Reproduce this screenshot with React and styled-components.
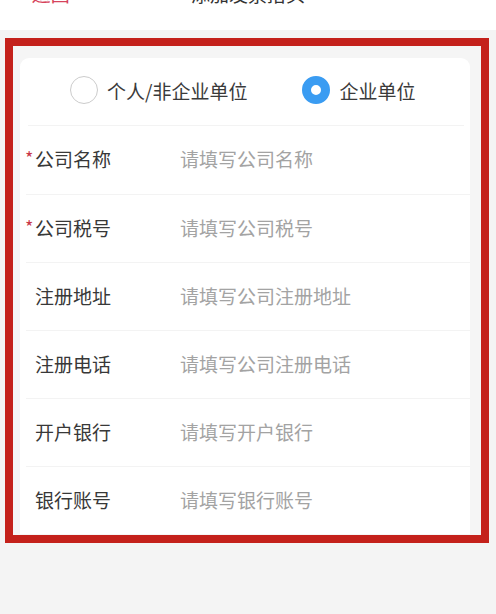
import React, { useState } from "react";
import styled, { createGlobalStyle } from "styled-components";

const fields = [
    { label: "公司名称", placeholder: "请填写公司名称", required: true },
    { label: "公司税号", placeholder: "请填写公司税号", required: true },
    { label: "注册地址", placeholder: "请填写公司注册地址" },
    { label: "注册电话", placeholder: "请填写公司注册电话" },
    { label: "开户银行", placeholder: "请填写开户银行" },
    { label: "银行账号", placeholder: "请填写银行账号" },
];

const App = () => {
    const [type, setType] = useState("company");

    return (
        <Page>
            <GlobalStyle />
            <Header>
                <HeaderBar>
                    <BackButton>&lt; 返回</BackButton>
                    <Title>添加发票抬头</Title>
                </HeaderBar>
            </Header>
            <Frame>
                <Card>
                    <RadioRow>
                        <RadioOption onClick={() => setType("person")}>
                            <RadioCircle checked={type === "person"} />
                            <RadioText>个人/非企业单位</RadioText>
                        </RadioOption>
                        <RadioOption onClick={() => setType("company")}>
                            <RadioCircle checked={type === "company"} />
                            <RadioText>企业单位</RadioText>
                        </RadioOption>
                    </RadioRow>
                    {fields.map((item) => (
                        <FieldRow key={item.label}>
                            <Label>
                                {item.required && <Star>*</Star>}
                                {item.label}
                            </Label>
                            <Input placeholder={item.placeholder} />
                        </FieldRow>
                    ))}
                </Card>
            </Frame>
        </Page>
    );
};

const GlobalStyle = createGlobalStyle`
    html, body {
        margin: 0;
        padding: 0;
        background: #f4f4f4;
        font-family: "Noto Sans CJK SC", "Noto Sans", sans-serif;
    }
`;

const Page = styled.div`
    width: 496px;
    height: 614px;
    overflow: hidden;
    background: #f4f4f4;
`;

const Header = styled.div`
    height: 30px;
    overflow: hidden;
    background: #ffffff;
`;

const HeaderBar = styled.div`
    position: relative;
    height: 44px;
    margin-top: -29px;
    display: flex;
    align-items: center;
    justify-content: center;
`;

const BackButton = styled.span`
    position: absolute;
    left: 17px;
    font-size: 19px;
    color: #d6435c;
`;

const Title = styled.span`
    font-size: 19px;
    color: #333333;
`;

const Frame = styled.div`
    margin: 8px 7px 0 5px;
    height: 477px;
    border: 8px solid #c4211b;
    background: #f5f5f5;
    padding: 12px 11px 0 7px;
    overflow: hidden;
`;

const Card = styled.div`
    background: #ffffff;
    border-radius: 9px 9px 0 0;
    display: flex;
    flex-direction: column;
`;

const RadioRow = styled.div`
    box-sizing: border-box;
    height: 68px;
    display: flex;
    align-items: center;
    padding: 0 0 3px 42px;
    gap: 55px;
    border-bottom: 1px solid #f3f3f3;
    margin: 0 6px 0 8px;
`;

const RadioOption = styled.label`
    display: flex;
    align-items: center;
    gap: 9px;
    cursor: pointer;
`;

const RadioCircle = styled.span`
    box-sizing: border-box;
    width: 28px;
    height: 28px;
    border-radius: 50%;
    border: ${({ checked }) => (checked ? "9px solid #3a9cf2" : "1.5px solid #cccccc")};
    background: #ffffff;
`;

const RadioText = styled.span`
    font-size: 19px;
    color: #3a3a3a;
`;

const FieldRow = styled.div`
    box-sizing: border-box;
    height: 68px;
    display: flex;
    align-items: center;
    padding-bottom: 3px;
    margin: 0 0 0 6px;
    border-top: 1px solid #f3f3f3;
    &:nth-child(2) {
        border-top: none;
    }
`;

const Label = styled.div`
    position: relative;
    width: 145px;
    padding-left: 9px;
    font-size: 19px;
    color: #383838;
`;

const Star = styled.span`
    position: absolute;
    left: -1px;
    top: -1px;
    font-size: 18px;
    color: #c8384a;
`;

const Input = styled.input`
    flex: 1;
    border: none;
    outline: none;
    background: transparent;
    font-family: "Noto Sans CJK SC", "Noto Sans", sans-serif;
    font-size: 19px;
    color: #333333;
    padding: 0;
    &::placeholder {
        color: #a3a3a3;
    }
`;

export default App;
